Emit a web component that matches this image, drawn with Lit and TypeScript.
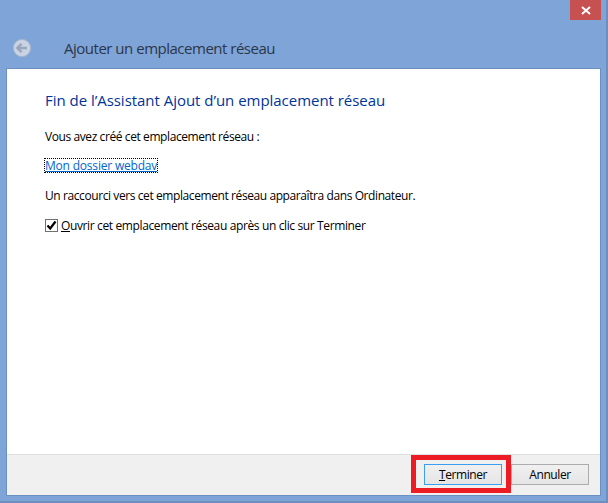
import { LitElement, html, css } from "lit";
import { customElement } from "lit/decorators.js";

@customElement("app-root")
export class AppRoot extends LitElement {
  static styles = css`
    :host {
      display: block;
      width: 608px;
      height: 503px;
      font-family: "Open Sans", "Noto Sans", sans-serif;
      font-size: 12px;
      letter-spacing: -0.41px;
      color: #000;
    }
    .window {
      box-sizing: border-box;
      width: 608px;
      height: 503px;
      background: #7fa4d8;
      border-right: 2px solid #6a8fc0;
      border-bottom: 2px solid #6a8fc0;
      display: flex;
      flex-direction: column;
      padding: 0 5px 5px 6px;
    }
    .titlebar {
      display: flex;
      justify-content: flex-end;
      height: 20px;
      flex: none;
    }
    .close {
      width: 31px;
      height: 20px;
      background: #c75050;
      display: flex;
      align-items: center;
      justify-content: center;
    }
    .nav {
      height: 48px;
      flex: none;
      display: flex;
      align-items: center;
      padding-left: 6px;
      padding-top: 7px;
      box-sizing: border-box;
    }
    .back {
      width: 20px;
      height: 20px;
      display: block;
      margin-right: 32px;
    }
    .title {
      font-size: 15px;
      color: #2b3648;
      letter-spacing: -0.49px;
    }
    .panel {
      flex: 1;
      display: flex;
      flex-direction: column;
      border: 1px solid #6a8fc0;
      background: #fff;
      min-height: 0;
    }
    .content {
      flex: 1;
      padding: 21px 0 0 38px;
      display: flex;
      flex-direction: column;
      align-items: flex-start;
    }
    h1 {
      margin: 0;
      font-weight: 400;
      font-size: 15px;
      line-height: 20px;
      color: #003399;
      letter-spacing: -0.03px;
    }
    p {
      margin: 0;
      line-height: 16px;
    }
    .p1 {
      margin-top: 19px;
    }
    .link {
      margin-top: 14px;
      color: #0066cc;
      text-decoration: underline;
      outline: 1px dotted #000;
      line-height: 13px;
      letter-spacing: -0.2px;
      display: block;
    }
    .p2 {
      margin-top: 16px;
    }
    .check {
      margin-top: 13px;
      display: flex;
      align-items: center;
      gap: 3px;
      letter-spacing: -0.37px;
    }
    .box {
      width: 13px;
      height: 13px;
      box-sizing: border-box;
      border: 1px solid #707070;
      background: #fff;
      display: block;
      flex: none;
    }
    .u {
      text-decoration: underline;
    }
    .footer {
      flex: none;
      height: 41px;
      box-sizing: border-box;
      background: #f0f0f0;
      border-top: 1px solid #dfdfdf;
      display: flex;
      justify-content: flex-end;
      align-items: flex-start;
      gap: 9px;
      padding: 9px 11px 0 0;
      position: relative;
    }
    .btn {
      box-sizing: border-box;
      width: 78px;
      height: 21px;
      font: inherit;
      letter-spacing: inherit;
      color: #000;
      padding: 0;
      border: 1px solid #acacac;
      background: linear-gradient(#f0f0f0, #e5e5e5);
    }
    .btn.primary {
      border-color: #3c9ef0;
    }
    .mark {
      position: absolute;
      left: 404px;
      top: 0;
      width: 100px;
      height: 38px;
      box-sizing: border-box;
      border: 5px solid #ed1c24;
      pointer-events: none;
    }
  `;

  render() {
    return html`
      <div class="window">
        <div class="titlebar">
          <div class="close">
            <svg width="10" height="9" viewBox="0 0 10 9">
              <path d="M1 1 L9 8 M9 1 L1 8" stroke="#fff" stroke-width="2" fill="none" />
            </svg>
          </div>
        </div>
        <div class="nav">
          <svg class="back" viewBox="0 0 20 20">
            <circle cx="10" cy="10" r="8.6" fill="#c9d3e4" stroke="#aab6ca" stroke-width="1" />
            <path d="M5 10 H15 M9.5 5.8 L5.3 10 L9.5 14.2" stroke="#9aa7bb" stroke-width="2.4" fill="none" />
          </svg>
          <span class="title">Ajouter un emplacement réseau</span>
        </div>
        <div class="panel">
          <div class="content">
            <h1>Fin de l’Assistant Ajout d’un emplacement réseau</h1>
            <p class="p1">Vous avez créé cet emplacement réseau :</p>
            <a class="link">Mon dossier webdav</a>
            <p class="p2">Un raccourci vers cet emplacement réseau apparaîtra dans Ordinateur.</p>
            <div class="check">
              <svg class="box" viewBox="0 0 11 11">
                <path d="M1.5 5.5 L4.2 8.5 L9.5 1.5" stroke="#000" stroke-width="2.2" fill="none" />
              </svg>
              <span><span class="u">O</span>uvrir cet emplacement réseau après un clic sur Terminer</span>
            </div>
          </div>
          <div class="footer">
            <button class="btn primary"><span class="u">T</span>erminer</button>
            <button class="btn">Annuler</button>
            <div class="mark"></div>
          </div>
        </div>
      </div>
    `;
  }
}
